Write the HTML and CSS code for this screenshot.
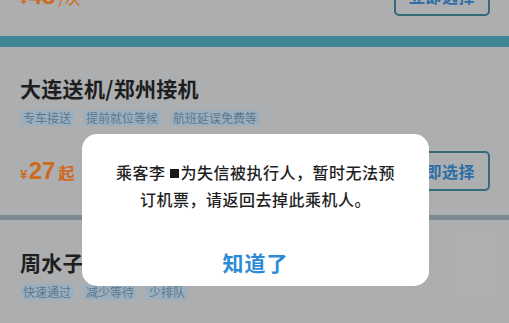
FILE: index.html
```html
<!DOCTYPE html>
<html lang="zh">
<head>
<meta charset="utf-8">
<link rel="stylesheet" href="styles.css">
</head>
<body>
<div class="page">
  <div class="card card-first">
    <div class="row">
      <div class="price"><span class="yen">¥</span><span class="num">48</span><span class="unit">/次</span></div>
      <div class="btn">立即选择</div>
    </div>
  </div>
  <div class="sep sep-teal"></div>
  <div class="card card-mid">
    <div class="title">大连送机/郑州接机</div>
    <div class="tags"><span class="tag">专车接送</span><span class="tag">提前就位等候</span><span class="tag">航班延误免费等</span></div>
    <div class="row">
      <div class="price"><span class="yen">¥</span><span class="num">27</span><span class="unit">起</span></div>
      <div class="btn">立即选择</div>
    </div>
  </div>
  <div class="sep sep-grey"></div>
  <div class="card card-last">
    <div class="title">周水子国际机场快速安检</div>
    <div class="tags"><span class="tag">快速通过</span><span class="tag">减少等待</span><span class="tag">少排队</span></div>
    <div class="thumb"></div>
  </div>
</div>
<div class="dialog">
  <p class="msg">乘客李 <span class="mask-box"></span>为失信被执行人，暂时无法预订机票，请返回去掉此乘机人。</p>
  <div class="ok">知道了</div>
</div>
</body>
</html>
```
FILE: styles.css
```css
html, body {
  margin: 0;
  padding: 0;
}
body {
  width: 509px;
  height: 323px;
  overflow: hidden;
  background: #a9aaac;
  font-family: "Noto Sans CJK SC", "Noto Sans", sans-serif;
  position: relative;
}
.page {
  display: flex;
  flex-direction: column;
}
.card {
  background: #adaeb0;
  padding: 0 19px 0 20px;
  position: relative;
}
.card-first {
  margin-top: -44px;
  height: 80px;
  box-sizing: border-box;
  padding-top: 20px;
}
.card-mid {
  padding-top: 26px;
  height: 168px;
  box-sizing: border-box;
}
.card-last {
  padding-top: 27px;
  height: 103px;
  box-sizing: border-box;
}
.sep-teal {
  height: 11px;
  background: #3f8797;
}
.sep-grey {
  height: 5px;
  background: #7c8b93;
}
.row {
  display: flex;
  justify-content: space-between;
  align-items: center;
}
.card-mid .row {
  margin-top: 25px;
}
.title {
  font-size: 21px;
  line-height: 30px;
  font-weight: 700;
  color: #1d1e20;
  letter-spacing: 0.3px;
}
.tags {
  display: flex;
  gap: 9px;
  margin-top: 7px;
}
.tag {
  font-size: 12px;
  line-height: 16px;
  padding: 0 3px;
  background: #9dafbc;
  color: #5a7890;
  border-radius: 2px;
}
.price {
  color: #cf6a1c;
  font-weight: 700;
  display: flex;
  align-items: baseline;
}
.yen {
  font-size: 13px;
}
.num {
  font-size: 24px;
  line-height: 26px;
  font-family: "Liberation Sans", Arial, sans-serif;
  margin: 0 3px 0 1px;
}
.unit {
  font-size: 16px;
}
.card-first .unit {
  font-weight: 400;
}
.btn {
  width: 96px;
  height: 40px;
  box-sizing: border-box;
  border: 2px solid #36697c;
  border-radius: 5px;
  color: #2d6ea6;
  font-size: 16px;
  font-weight: 700;
  display: flex;
  align-items: center;
  justify-content: center;
  letter-spacing: 0.5px;
}
.thumb {
  position: absolute;
  right: 8px;
  top: 12px;
  width: 48px;
  height: 70px;
  background: rgba(255, 255, 255, 0.025);
  border-radius: 3px;
}
.dialog {
  position: absolute;
  left: 82px;
  top: 134px;
  width: 347px;
  height: 152px;
  background: #ffffff;
  border-radius: 15px;
  box-sizing: border-box;
  padding: 25px 26px 0;
  display: flex;
  flex-direction: column;
  align-items: center;
}
.msg {
  margin: 0;
  font-size: 16px;
  line-height: 27px;
  letter-spacing: 0.5px;
  font-weight: 500;
  color: #1f1f1f;
  text-align: center;
}
.mask-box {
  display: inline-block;
  width: 9px;
  height: 9px;
  background: #1a1a1a;
  margin-right: 2px;
  vertical-align: 1px;
}
.ok {
  margin-top: 35px;
  font-size: 21px;
  line-height: 28px;
  font-weight: 700;
  color: #2c8ad6;
  letter-spacing: 1px;
}
```
